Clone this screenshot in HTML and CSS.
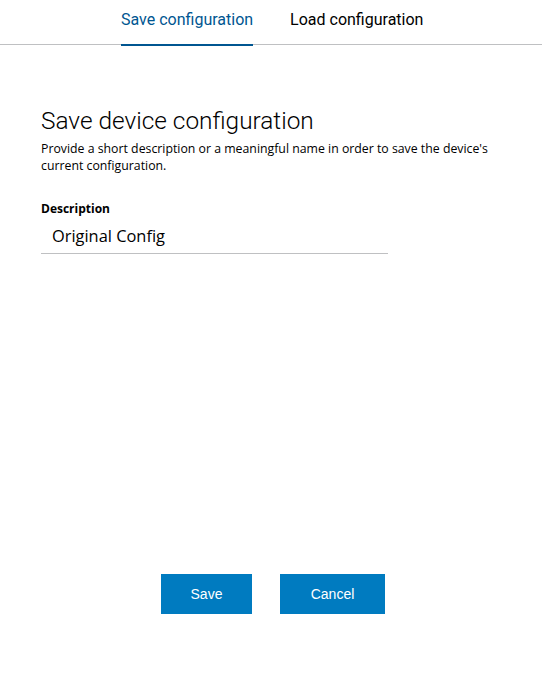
FILE: index.html
```html
<!DOCTYPE html>
<html>
<head>
<meta charset="utf-8">
<link rel="stylesheet" href="styles.css">
</head>
<body>
<div class="page">
  <nav class="tabs">
    <div class="tab active">Save configuration</div>
    <div class="tab">Load configuration</div>
  </nav>
  <main class="content">
    <h1 class="title">Save device configuration</h1>
    <p class="intro">Provide a short description or a meaningful name in order to save the device's current configuration.</p>
    <label class="label">Description</label>
    <div class="field">Original Config</div>
  </main>
  <div class="actions">
    <button class="btn save">Save</button>
    <button class="btn cancel">Cancel</button>
  </div>
</div>
</body>
</html>
```

FILE: styles.css
```css
html, body {
  margin: 0;
  padding: 0;
  background: #fff;
}
body {
  font-family: Roboto, "Liberation Sans", sans-serif;
  color: #000;
  width: 542px;
  height: 676px;
}
.page {
  display: flex;
  flex-direction: column;
  height: 676px;
}
.tabs {
  display: flex;
  justify-content: flex-start;
  gap: 37px;
  padding-left: 121px;
  border-bottom: 1px solid #bfc0c2;
  height: 45px;
  box-sizing: border-box;
}
.tab {
  font-size: 16px;
  line-height: 20px;
  padding-top: 10px;
  color: #000;
  box-sizing: border-box;
  height: 45px;
}
.tab.active {
  color: #005691;
  border-bottom: 2px solid #005691;
  height: 46px;
}
.content {
  padding: 62px 41px 0 41px;
  flex: 1;
}
.title {
  font-size: 24.4px;
  font-weight: 300;
  margin: 0;
  line-height: 28px;
}
.intro {
  font-family: "Open Sans", "Noto Sans", sans-serif;
  font-size: 12.3px;
  line-height: 17px;
  margin: 5px 0 0 0;
  width: 470px;
}
.label {
  display: block;
  font-family: "Open Sans", "Noto Sans", sans-serif;
  font-size: 12px;
  font-weight: 700;
  margin-top: 27px;
  line-height: 15px;
}
.field {
  width: 336px;
  font-family: "Open Sans", "Noto Sans", sans-serif;
  font-size: 16.4px;
  line-height: 20px;
  padding: 10px 0 7px 11px;
  border-bottom: 1px solid #bfc0c2;
}
.actions {
  display: flex;
  gap: 28px;
  padding-left: 161px;
  padding-bottom: 62px;
}
.btn {
  background: #007bc0;
  color: #fff;
  border: none;
  height: 40px;
  font-family: "Liberation Sans", Arial, sans-serif;
  font-size: 14px;
  padding: 0;
}
.btn.save { width: 91px; }
.btn.cancel { width: 105px; }
```
